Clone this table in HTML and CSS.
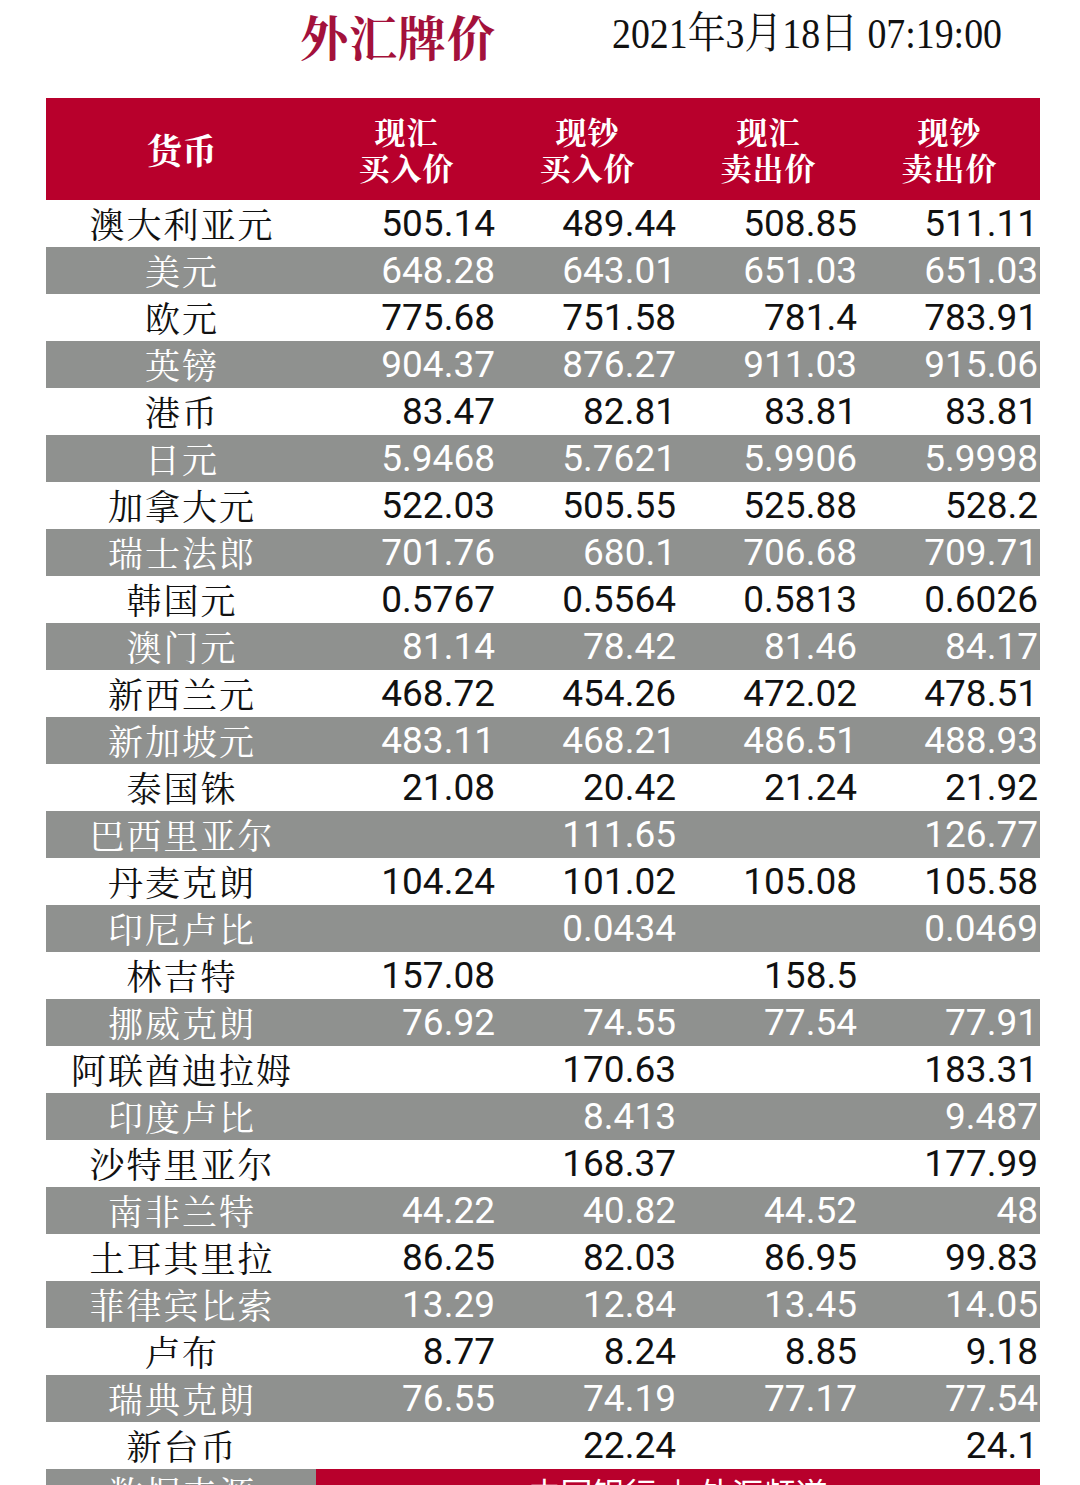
FILE: index.html
```html
<!DOCTYPE html>
<html lang="zh-CN">
<head>
<meta charset="utf-8">
<title>外汇牌价</title>
<link rel="stylesheet" href="styles.css">
</head>
<body>
<div class="page">
  <div class="topbar">
    <h1 class="title">外汇牌价</h1>
    <div class="date">2021年3月18日 07:19:00</div>
  </div>
  <div class="rates">
    <div class="row head">
      <div class="c name">货币</div>
      <div class="c"><div>现汇</div><div>买入价</div></div>
      <div class="c"><div>现钞</div><div>买入价</div></div>
      <div class="c"><div>现汇</div><div>卖出价</div></div>
      <div class="c"><div>现钞</div><div>卖出价</div></div>
    </div>
    <div class="row"><div class="c name">澳大利亚元</div><div class="c num">505.14</div><div class="c num">489.44</div><div class="c num">508.85</div><div class="c num">511.11</div></div>
    <div class="row alt"><div class="c name">美元</div><div class="c num">648.28</div><div class="c num">643.01</div><div class="c num">651.03</div><div class="c num">651.03</div></div>
    <div class="row"><div class="c name">欧元</div><div class="c num">775.68</div><div class="c num">751.58</div><div class="c num">781.4</div><div class="c num">783.91</div></div>
    <div class="row alt"><div class="c name">英镑</div><div class="c num">904.37</div><div class="c num">876.27</div><div class="c num">911.03</div><div class="c num">915.06</div></div>
    <div class="row"><div class="c name">港币</div><div class="c num">83.47</div><div class="c num">82.81</div><div class="c num">83.81</div><div class="c num">83.81</div></div>
    <div class="row alt"><div class="c name">日元</div><div class="c num">5.9468</div><div class="c num">5.7621</div><div class="c num">5.9906</div><div class="c num">5.9998</div></div>
    <div class="row"><div class="c name">加拿大元</div><div class="c num">522.03</div><div class="c num">505.55</div><div class="c num">525.88</div><div class="c num">528.2</div></div>
    <div class="row alt"><div class="c name">瑞士法郎</div><div class="c num">701.76</div><div class="c num">680.1</div><div class="c num">706.68</div><div class="c num">709.71</div></div>
    <div class="row"><div class="c name">韩国元</div><div class="c num">0.5767</div><div class="c num">0.5564</div><div class="c num">0.5813</div><div class="c num">0.6026</div></div>
    <div class="row alt"><div class="c name">澳门元</div><div class="c num">81.14</div><div class="c num">78.42</div><div class="c num">81.46</div><div class="c num">84.17</div></div>
    <div class="row"><div class="c name">新西兰元</div><div class="c num">468.72</div><div class="c num">454.26</div><div class="c num">472.02</div><div class="c num">478.51</div></div>
    <div class="row alt"><div class="c name">新加坡元</div><div class="c num">483.11</div><div class="c num">468.21</div><div class="c num">486.51</div><div class="c num">488.93</div></div>
    <div class="row"><div class="c name">泰国铢</div><div class="c num">21.08</div><div class="c num">20.42</div><div class="c num">21.24</div><div class="c num">21.92</div></div>
    <div class="row alt"><div class="c name">巴西里亚尔</div><div class="c num"></div><div class="c num">111.65</div><div class="c num"></div><div class="c num">126.77</div></div>
    <div class="row"><div class="c name">丹麦克朗</div><div class="c num">104.24</div><div class="c num">101.02</div><div class="c num">105.08</div><div class="c num">105.58</div></div>
    <div class="row alt"><div class="c name">印尼卢比</div><div class="c num"></div><div class="c num">0.0434</div><div class="c num"></div><div class="c num">0.0469</div></div>
    <div class="row"><div class="c name">林吉特</div><div class="c num">157.08</div><div class="c num"></div><div class="c num">158.5</div><div class="c num"></div></div>
    <div class="row alt"><div class="c name">挪威克朗</div><div class="c num">76.92</div><div class="c num">74.55</div><div class="c num">77.54</div><div class="c num">77.91</div></div>
    <div class="row"><div class="c name">阿联酋迪拉姆</div><div class="c num"></div><div class="c num">170.63</div><div class="c num"></div><div class="c num">183.31</div></div>
    <div class="row alt"><div class="c name">印度卢比</div><div class="c num"></div><div class="c num">8.413</div><div class="c num"></div><div class="c num">9.487</div></div>
    <div class="row"><div class="c name">沙特里亚尔</div><div class="c num"></div><div class="c num">168.37</div><div class="c num"></div><div class="c num">177.99</div></div>
    <div class="row alt"><div class="c name">南非兰特</div><div class="c num">44.22</div><div class="c num">40.82</div><div class="c num">44.52</div><div class="c num">48</div></div>
    <div class="row"><div class="c name">土耳其里拉</div><div class="c num">86.25</div><div class="c num">82.03</div><div class="c num">86.95</div><div class="c num">99.83</div></div>
    <div class="row alt"><div class="c name">菲律宾比索</div><div class="c num">13.29</div><div class="c num">12.84</div><div class="c num">13.45</div><div class="c num">14.05</div></div>
    <div class="row"><div class="c name">卢布</div><div class="c num">8.77</div><div class="c num">8.24</div><div class="c num">8.85</div><div class="c num">9.18</div></div>
    <div class="row alt"><div class="c name">瑞典克朗</div><div class="c num">76.55</div><div class="c num">74.19</div><div class="c num">77.17</div><div class="c num">77.54</div></div>
    <div class="row"><div class="c name">新台币</div><div class="c num"></div><div class="c num">22.24</div><div class="c num"></div><div class="c num">24.1</div></div>
    <div class="row foot">
      <div class="c name src">数据来源</div>
      <div class="c source">中国银行 <span class="bar">|</span> 外汇频道</div>
    </div>
  </div>
</div>
</body>
</html>
```

FILE: styles.css
```css
html, body {
  margin: 0;
  padding: 0;
  background: #ffffff;
}

.page {
  width: 1080px;
  height: 1485px;
  overflow: hidden;
}

.topbar {
  height: 98px;
  display: flex;
  align-items: flex-start;
}

.title {
  margin: 8px 0 0 300px;
  font-family: "Noto Serif CJK SC", "Noto Sans CJK SC", serif;
  font-weight: 700;
  font-size: 48px;
  line-height: 56px;
  color: #a3113b;
  letter-spacing: 1px;
}

.date {
  margin: 11px 0 0 116px;
  font-family: "Liberation Serif", "Noto Serif CJK SC", serif;
  font-size: 43px;
  line-height: 46px;
  color: #111111;
  transform: scaleX(0.88);
  transform-origin: left center;
  white-space: nowrap;
}

.rates {
  margin-left: 46px;
  width: 994px;
}

.row {
  display: grid;
  grid-template-columns: 270px repeat(4, 181px);
  height: 47px;
  align-items: center;
  color: #111111;
  background: #ffffff;
}

.row.alt {
  background: #8f918f;
  color: #ffffff;
}

.row.head {
  height: 102px;
  background: #b8002c;
  color: #ffffff;
}

.c {
  white-space: nowrap;
}

.head .c {
  text-align: center;
  font-family: "Noto Serif CJK SC", "Noto Sans CJK SC", serif;
  font-weight: 700;
  font-size: 31px;
  line-height: 36px;
  letter-spacing: 1px;
}

.head .c.name {
  font-size: 35px;
  line-height: 47px;
  letter-spacing: 0;
}

.name {
  text-align: center;
  font-family: "Noto Serif CJK SC", "Noto Sans CJK SC", serif;
  font-size: 35px;
  line-height: 47px;
  letter-spacing: 2px;
  text-indent: 2px;
}

.num {
  text-align: right;
  padding-right: 2px;
  font-family: Roboto, "Liberation Sans", sans-serif;
  font-size: 37px;
  line-height: 47px;
}

.row.foot {
  grid-template-columns: 270px 724px;
}

.foot .src {
  background: #8f918f;
  color: #ffffff;
  height: 47px;
}

.foot .source {
  background: #b8002c;
  color: #ffffff;
  height: 47px;
  text-align: center;
  font-family: "Noto Sans CJK SC", sans-serif;
  font-size: 32px;
  line-height: 47px;
  letter-spacing: 0;
}

.bar {
  display: inline-block;
  margin: 0 10px;
}
```
